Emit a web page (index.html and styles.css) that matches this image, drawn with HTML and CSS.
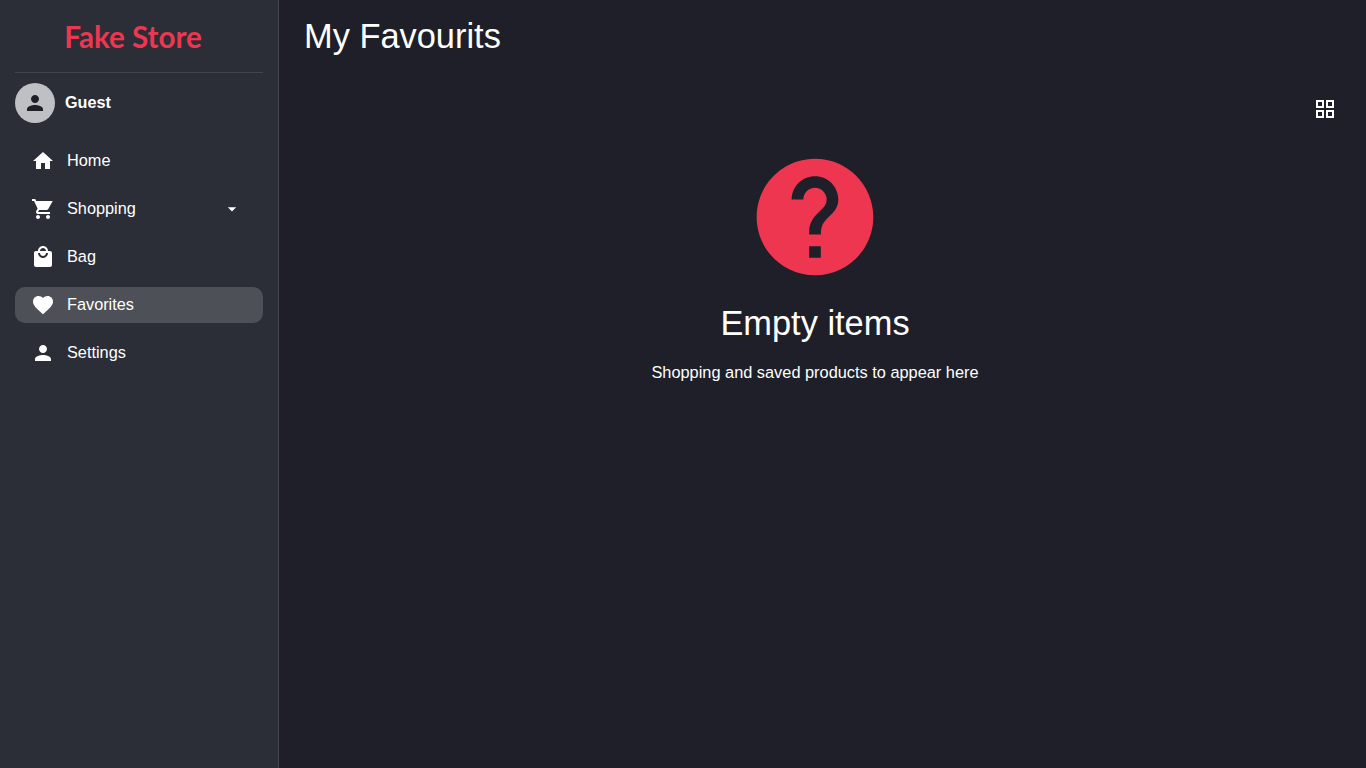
FILE: index.html
```html
<!DOCTYPE html>
<html lang="en">
<head>
  <meta charset="UTF-8">
  <title>Fake Store</title>
  <link rel="stylesheet" href="styles.css">
</head>
<body>
  <div class="app">
    <aside class="sidebar">
      <div class="logo">Fake Store</div>
      <div class="user">
        <div class="avatar">
          <svg viewBox="0 0 24 24" width="24" height="24"><path d="M12 12c2.21 0 4-1.79 4-4s-1.79-4-4-4-4 1.79-4 4 1.79 4 4 4zm0 2c-2.67 0-8 1.34-8 4v2h16v-2c0-2.66-5.33-4-8-4z"/></svg>
        </div>
        <span class="user-name">Guest</span>
      </div>
      <nav class="nav">
        <a class="nav-item">
          <svg viewBox="0 0 24 24" width="24" height="24"><path d="M10 20v-6h4v6h5v-8h3L12 3 2 12h3v8z"/></svg>
          <span class="nav-label">Home</span>
        </a>
        <a class="nav-item">
          <svg viewBox="0 0 24 24" width="24" height="24"><path d="M7 18c-1.1 0-1.99.9-1.99 2S5.9 22 7 22s2-.9 2-2-.9-2-2-2zM1 2v2h2l3.6 7.59-1.35 2.45c-.16.28-.25.61-.25.96 0 1.1.9 2 2 2h12v-2H7.42c-.14 0-.25-.11-.25-.25l.03-.12.9-1.63h7.45c.75 0 1.41-.41 1.75-1.03L21.7 4H5.21l-.94-2H1zm16 16c-1.1 0-1.99.9-1.99 2s.89 2 1.99 2 2-.9 2-2-.9-2-2-2z"/></svg>
          <span class="nav-label">Shopping</span>
          <svg class="caret" viewBox="0 0 24 24" width="20" height="20"><path d="M7 10l5 5 5-5z"/></svg>
        </a>
        <a class="nav-item">
          <svg viewBox="0 0 24 24" width="24" height="24"><path d="M19 6h-2c0-2.76-2.24-5-5-5S7 3.24 7 6H5c-1.1 0-1.99.9-1.99 2L3 20c0 1.1.9 2 2 2h14c1.1 0 2-.9 2-2V8c0-1.1-.9-2-2-2zm-7-3c1.66 0 3 1.34 3 3H9c0-1.66 1.34-3 3-3zm0 10c-2.76 0-5-2.24-5-5h2c0 1.66 1.34 3 3 3s3-1.34 3-3h2c0 2.76-2.24 5-5 5z"/></svg>
          <span class="nav-label">Bag</span>
        </a>
        <a class="nav-item active">
          <svg viewBox="0 0 24 24" width="24" height="24"><path d="M12 21.35l-1.45-1.32C5.4 15.36 2 12.28 2 8.5 2 5.42 4.42 3 7.5 3c1.74 0 3.41.81 4.5 2.09C13.09 3.81 14.76 3 16.5 3 19.58 3 22 5.42 22 8.5c0 3.78-3.4 6.86-8.55 11.54L12 21.35z"/></svg>
          <span class="nav-label">Favorites</span>
        </a>
        <a class="nav-item">
          <svg viewBox="0 0 24 24" width="24" height="24"><path d="M12 12c2.21 0 4-1.79 4-4s-1.79-4-4-4-4 1.79-4 4 1.79 4 4 4zm0 2c-2.67 0-8 1.34-8 4v2h16v-2c0-2.66-5.33-4-8-4z"/></svg>
          <span class="nav-label">Settings</span>
        </a>
      </nav>
    </aside>

    <main class="content">
      <h1 class="page-title">My Favourits</h1>
      <div class="toolbar">
        <svg viewBox="0 0 24 24" width="24" height="24"><path d="M3 3v8h8V3H3zm6 6H5V5h4v4zm-6 4v8h8v-8H3zm6 6H5v-4h4v4zm4-16v8h8V3h-8zm6 6h-4V5h4v4zm-6 4v8h8v-8h-8zm6 6h-4v-4h4v4z"/></svg>
      </div>
      <div class="empty">
        <svg class="empty-icon" viewBox="0 0 24 24" width="140" height="140"><path d="M12 2C6.48 2 2 6.48 2 12s4.48 10 10 10 10-4.48 10-10S17.52 2 12 2zm1 17h-2v-2h2v2zm2.07-7.75l-.9.92C13.45 12.9 13 13.5 13 15h-2v-.5c0-1.1.45-2.1 1.17-2.83l1.24-1.26c.37-.36.59-.86.59-1.41 0-1.1-.9-2-2-2s-2 .9-2 2H8c0-2.21 1.79-4 4-4s4 1.79 4 4c0 .88-.36 1.68-.93 2.25z"/></svg>
        <h2 class="empty-title">Empty items</h2>
        <p class="empty-text">Shopping and saved products to appear here</p>
      </div>
    </main>
  </div>
</body>
</html>
```

FILE: styles.css
```css
body {
  margin: 0;
  background-color: #1e1f28;
  color: #fff;
  font-family: "Liberation Sans", Arial, sans-serif;
}
svg {
  display: block;
  fill: currentColor;
  flex-shrink: 0;
}
.app {
  display: flex;
  height: 100vh;
  overflow: hidden;
}
.sidebar {
  box-sizing: border-box;
  width: 279px;
  padding: 0 15px;
  background-color: #2b2e37;
  border-right: 1px solid #43454d;
}
.logo {
  height: 72px;
  padding-right: 12px;
  border-bottom: 1px solid #43454d;
  color: #ef3651;
  font-family: Lato, sans-serif;
  font-size: 29.6px;
  font-weight: 700;
  line-height: 74px;
  text-align: center;
}
.user {
  display: flex;
  align-items: center;
  gap: 10px;
  margin-top: 10px;
}
.avatar {
  display: flex;
  align-items: center;
  justify-content: center;
  width: 40px;
  height: 40px;
  border-radius: 50%;
  background-color: #bfc0c3;
  color: #1e1f28;
}
.user-name {
  margin-top: -1px;
  font-size: 16.2px;
  font-weight: bold;
}
.nav {
  display: flex;
  flex-direction: column;
  gap: 12px;
  margin-top: 20px;
}
.nav-item {
  display: flex;
  align-items: center;
  height: 36px;
  padding: 0 16px;
  border-radius: 10px;
  font-size: 16.3px;
}
.nav-item.active {
  background-color: #4e5058;
}
.nav-label {
  flex: 1;
  margin-left: 12px;
  margin-top: -1px;
}
.caret {
  margin-right: 5px;
}
.content {
  flex: 1;
  padding: 0 40px 0 25px;
}
.page-title {
  margin: 0;
  font-size: 34.4px;
  font-weight: normal;
  line-height: 72px;
}
.toolbar {
  display: flex;
  justify-content: flex-end;
  margin: 25px -11px 0 0;
}
.empty {
  display: flex;
  flex-direction: column;
  align-items: center;
  margin-top: 26px;
}
.empty-icon {
  color: #ef3651;
}
.empty-title {
  margin: 14px 0 0;
  font-size: 34.4px;
  font-weight: normal;
  line-height: 44px;
}
.empty-text {
  margin: 15px 0 0;
  font-size: 16.35px;
  line-height: 24px;
}
```
